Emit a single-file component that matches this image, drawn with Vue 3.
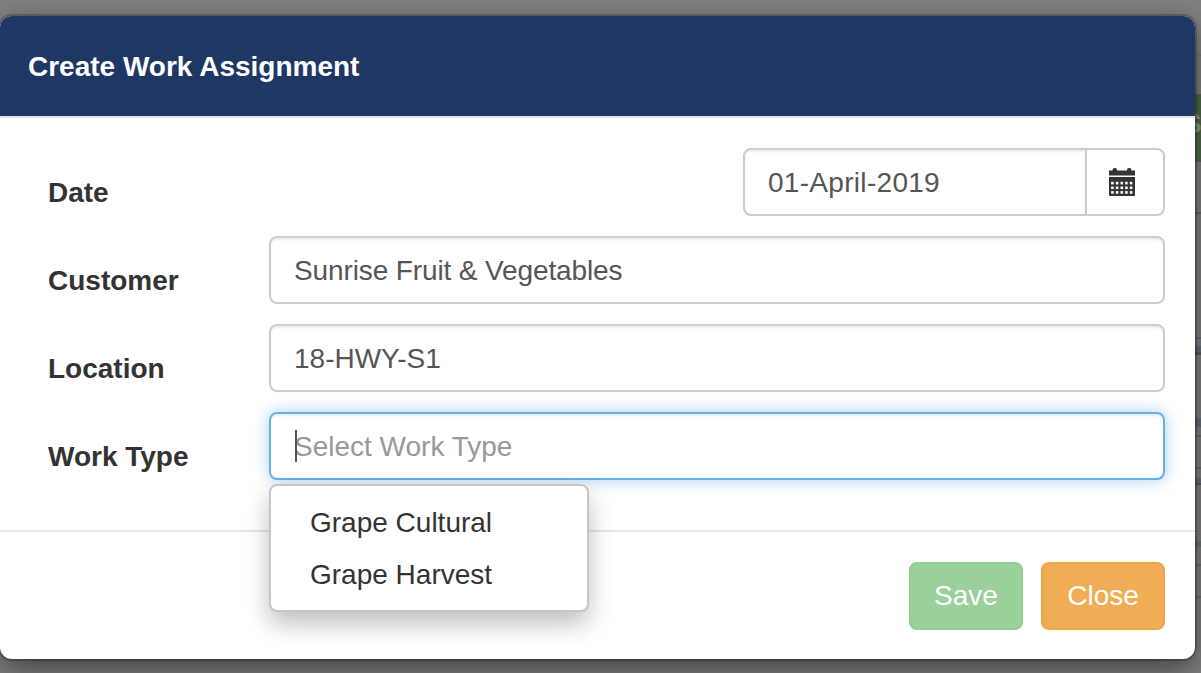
<script setup>
const rows = [
  { label: 'Customer', value: 'Sunrise Fruit & Vegetables', tight: true },
  { label: 'Location', value: '18-HWY-S1', tight: false }
]
const options = ['Grape Cultural', 'Grape Harvest']
const bands = [
  { top: 54, height: 2, color: 'rgba(0,0,0,.06)' },
  { top: 212, height: 2, color: 'rgba(0,0,0,.2)' },
  { top: 337, height: 2, color: 'rgba(0,0,0,.15)' },
  { top: 346, height: 6, color: 'rgba(40,90,140,.35)' },
  { top: 352, height: 3, color: 'rgba(0,0,0,.3)' },
  { top: 418, height: 6, color: 'rgba(40,90,140,.35)' },
  { top: 424, height: 3, color: 'rgba(0,0,0,.15)' },
  { top: 435, height: 2, color: 'rgba(0,0,0,.15)' },
  { top: 467, height: 2, color: 'rgba(0,0,0,.15)' },
  { top: 478, height: 5, color: 'rgba(40,90,140,.35)' },
  { top: 483, height: 2, color: 'rgba(0,0,0,.3)' },
  { top: 541, height: 6, color: 'rgba(40,90,140,.3)' },
  { top: 564, height: 2, color: 'rgba(0,0,0,.15)' },
  { top: 596, height: 2, color: 'rgba(0,0,0,.15)' }
]
const calCols = [2.1, 6.8, 11.5, 16.1, 20.8]
const calRows = [13.8, 18.5, 23.1]
</script>

<template>
  <div class="page">
    <div class="behind">
      <div class="green"><span>S</span></div>
      <div
        v-for="b in bands"
        :key="b.top"
        class="band"
        :style="{ top: b.top + 'px', height: b.height + 'px', background: b.color }"
      ></div>
    </div>
    <div class="modal">
      <header class="head"><h4>Create Work Assignment</h4></header>
      <div class="body">
        <div class="row">
          <label>Date</label>
          <div class="date-cell">
            <div class="group">
              <div class="date-value">01-April-2019</div>
              <div class="addon">
                <svg width="26" height="28" viewBox="0 0 26 28">
                  <path fill="#333" d="M0 2.500h3.500V2a2 2 0 0 1 2-2h.5a2 2 0 0 1 2 2v.5h10V2a2 2 0 0 1 2-2h.5a2 2 0 0 1 2 2v.5H26V7.500H0z" />
                  <path fill="#333" d="M0 9h26v18a1 1 0 0 1-1 1H1a1 1 0 0 1-1-1z" />
                  <g fill="#fff">
                    <template v-for="y in calRows" :key="y">
                      <rect v-for="x in calCols" :key="x" :x="x" :y="y" width="2.600" height="2.600" />
                    </template>
                  </g>
                </svg>
              </div>
            </div>
          </div>
        </div>
        <div v-for="r in rows" :key="r.label" class="row">
          <label>{{ r.label }}</label>
          <div class="input" :class="{ tight: r.tight }">{{ r.value }}</div>
        </div>
        <div class="row">
          <label>Work Type</label>
          <div class="select-wrap">
            <div class="input focus"><span class="caret"></span><span class="placeholder">Select Work Type</span></div>
            <ul class="menu">
              <li v-for="o in options" :key="o">{{ o }}</li>
            </ul>
          </div>
        </div>
      </div>
      <footer class="foot">
        <button class="btn save">Save</button>
        <button class="btn close">Close</button>
      </footer>
    </div>
  </div>
</template>

<style>
html, body { margin: 0; overflow: hidden; }
</style>

<style scoped>
.page {
  position: relative;
  width: 1201px;
  height: 673px;
  box-sizing: border-box;
  padding-top: 16px;
  overflow: hidden;
  background: #808080;
  font-family: "Liberation Sans", Arial, sans-serif;
  font-size: 28px;
  color: #555;
}
.behind {
  position: absolute;
  right: 0;
  top: 0;
  width: 6px;
  height: 673px;
  overflow: hidden;
}
.band {
  position: absolute;
  left: 0;
  width: 6px;
}
.green {
  position: absolute;
  left: 0;
  top: 94px;
  width: 6px;
  height: 68px;
  overflow: hidden;
  background: #4d6b48;
}
.green span {
  position: absolute;
  left: -12px;
  top: 10px;
  color: #8b9c88;
  font-weight: 700;
  line-height: 40px;
}
.modal {
  position: relative;
  width: 1195px;
  height: 643px;
  box-sizing: border-box;
  background: #fff;
  border-radius: 12px;
  box-shadow: 0 0 0 2px rgba(0,0,0,.2), 0 10px 30px rgba(0,0,0,.5);
  overflow: hidden;
  display: flex;
  flex-direction: column;
}
.head {
  height: 102px;
  box-sizing: border-box;
  background: #1f3764;
  border-bottom: 2px solid #e5e5e5;
  padding: 31px 28px 0;
}
.head h4 {
  margin: 0;
  color: #fff;
  font-size: 28px;
  line-height: 40px;
  font-weight: 700;
}
.body {
  height: 414px;
  box-sizing: border-box;
  padding: 30px 30px 0 48px;
  border-bottom: 2px solid #e5e5e5;
  display: flex;
  flex-direction: column;
  gap: 20px;
}
.row {
  display: flex;
  height: 68px;
  flex: none;
}
.row label {
  width: 221px;
  flex: none;
  color: #333;
  font-weight: 700;
  line-height: 40px;
  padding-top: 25px;
}
.date-cell { flex: 1; display: flex; justify-content: flex-end; }
.group {
  width: 422px;
  height: 68px;
  box-sizing: border-box;
  display: flex;
  border: 2px solid #ccc;
  border-radius: 8px;
}
.date-value {
  flex: 1;
  padding: 1px 23px 0;
  line-height: 64px;
  letter-spacing: .3px;
  box-shadow: inset 0 2px 2px rgba(0,0,0,.075);
  border-radius: 6px 0 0 6px;
}
.addon {
  width: 78px;
  box-sizing: border-box;
  padding-right: 6px;
  border-left: 2px solid #ccc;
  display: flex;
  align-items: center;
  justify-content: center;
}
.input {
  flex: 1;
  height: 68px;
  box-sizing: border-box;
  border: 2px solid #ccc;
  border-radius: 8px;
  padding: 1px 23px 0;
  line-height: 64px;
  box-shadow: inset 0 2px 2px rgba(0,0,0,.075);
  white-space: nowrap;
}
.tight { letter-spacing: -.12px; }
.select-wrap { flex: 1; position: relative; display: flex; }
.focus {
  border-color: #66afe9;
  box-shadow: inset 0 2px 2px rgba(0,0,0,.075), 0 0 16px rgba(102,175,233,.6);
  position: relative;
}
.caret {
  position: absolute;
  left: 24px;
  top: 16px;
  width: 2px;
  height: 32px;
  background: #555;
}
.placeholder { color: #999; }
.menu {
  position: absolute;
  left: 0;
  top: 72px;
  width: 320px;
  height: 128px;
  box-sizing: border-box;
  margin: 0;
  padding: 11px 0 0;
  list-style: none;
  background: #fff;
  border: 2px solid #c6c6c6;
  border-radius: 8px;
  box-shadow: 0 12px 24px rgba(0,0,0,.25);
  color: #333;
}
.menu li {
  padding-left: 39px;
  height: 52px;
  line-height: 52px;
}
.foot {
  flex: 1;
  display: flex;
  justify-content: flex-end;
  gap: 18px;
  padding: 30px 30px 0 0;
}
.btn {
  height: 68px;
  box-sizing: border-box;
  border-radius: 8px;
  border: 2px solid;
  color: #fff;
  font: inherit;
  padding: 0;
}
.save { width: 114px; background: #9ad09a; border-color: #92cc92; }
.close { width: 124px; background: #f0ad56; border-color: #eea549; }
</style>
